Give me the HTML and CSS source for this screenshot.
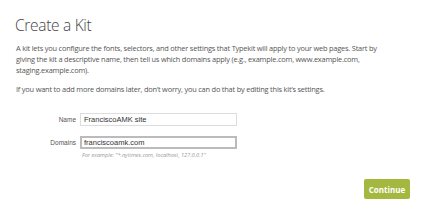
FILE: index.html
```html
<!DOCTYPE html>
<html lang="en">
<head>
    <meta charset="UTF-8">
    <title>Create a Kit</title>
    <link rel="stylesheet" href="styles.css">
</head>
<body>
    <div class="page">
        <h1>Create a Kit</h1>

        <p class="intro">A kit lets you configure the fonts, selectors, and other settings that Typekit will apply to your web pages. Start by giving the kit a descriptive name, then tell us which domains apply (e.g., example.com, www.example.com, staging.example.com).</p>
        <p class="intro">If you want to add more domains later, don’t worry, you can do that by editing this kit’s settings.</p>

        <form class="kit-form">
            <div class="row">
                <label>Name</label>
                <input type="text" value="FranciscoAMK site">
            </div>
            <div class="row">
                <label>Domains</label>
                <div class="field">
                    <input type="text" class="focused" value="franciscoamk.com">
                    <div class="hint">For example: "*.nytimes.com, localhost, 127.0.0.1"</div>
                </div>
            </div>
            <div class="actions">
                <button type="button" class="continue">Continue</button>
            </div>
        </form>
    </div>
</body>
</html>
```

FILE: styles.css
```css
body {
    margin: 0;
    background: #fff;
    font-family: "Open Sans", Arial, sans-serif;
    color: #4a4a4a;
}

.page {
    padding: 15px 20px 0 15px;
}

h1 {
    margin: 0 0 8px 0;
    font-size: 15.5px;
    line-height: 20px;
    font-weight: 300;
    color: #444;
    letter-spacing: -0.3px;
}

.intro {
    margin: 0 0 8px 1px;
    font-size: 7.4px;
    line-height: 11px;
    letter-spacing: -0.2px;
    color: #555;
    max-width: 376px;
}

.kit-form {
    margin-top: 18px;
}

.row {
    display: flex;
    align-items: flex-start;
    margin-bottom: 10px;
}

.row label {
    display: flex;
    align-items: center;
    justify-content: flex-end;
    width: 61px;
    height: 13px;
    padding-right: 4px;
    font-family: "Liberation Sans", Arial, sans-serif;
    font-size: 6.5px;
    color: #555;
}

.row input {
    display: block;
    box-sizing: border-box;
    width: 157px;
    height: 13px;
    margin: 0;
    padding: 0 3px;
    border: 1px solid #ddd;
    font-family: "Liberation Sans", Arial, sans-serif;
    font-size: 7.5px;
    color: #333;
}

.row input.focused {
    border: 2px solid #bbb;
    padding: 0 2px;
}

.hint {
    margin: 3px 0 0 2px;
    font-size: 5.6px;
    line-height: 7px;
    font-style: italic;
    color: #999;
}

.actions {
    display: flex;
    justify-content: flex-end;
    margin-top: 20px;
}

.continue {
    width: 46px;
    height: 20px;
    border: none;
    border-radius: 2px;
    background: #a4b73f;
    color: #fff;
    font-family: "Open Sans", Arial, sans-serif;
    font-size: 8px;
    font-weight: 700;
    padding: 0;
}
```
